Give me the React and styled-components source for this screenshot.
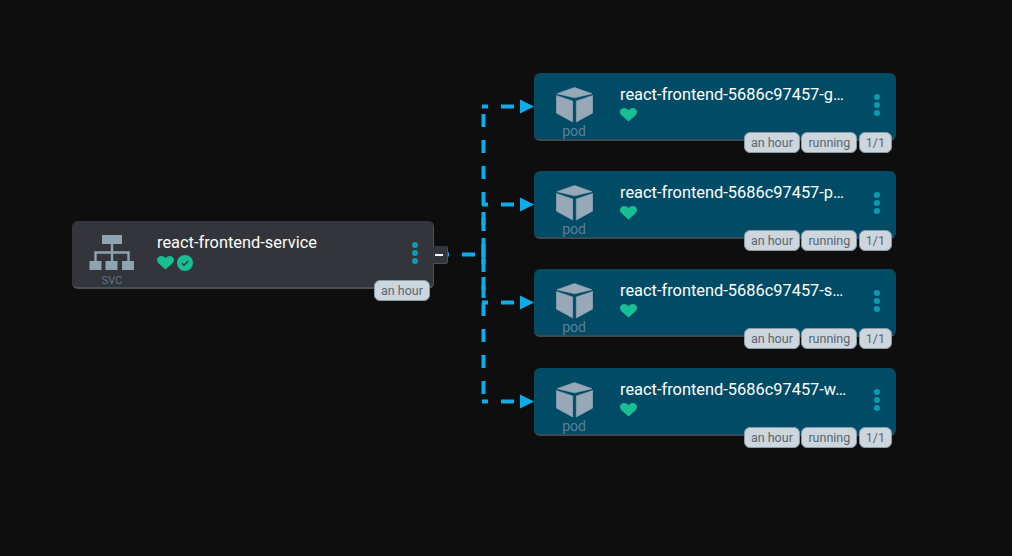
import React from "react";
import styled, { createGlobalStyle } from "styled-components";

const GlobalStyle = createGlobalStyle`
  html, body {
    margin: 0;
    background: #0e0e0e;
    font-family: Roboto, "Liberation Sans", sans-serif;
  }
`;

const Canvas = styled.div`
  position: relative;
  width: 1012px;
  height: 556px;
  overflow: hidden;
  background: #0e0e0e;
`;

const Edges = styled.svg`
  position: absolute;
  left: 0;
  top: 0;
`;

const Node = styled.div`
  position: absolute;
  left: ${(p) => p.$x}px;
  top: ${(p) => p.$y}px;
  width: 362px;
  height: 68px;
  box-sizing: border-box;
  display: flex;
  align-items: stretch;
  border-radius: 6px;
  background: ${(p) => (p.$pod ? "#004c67" : "#33353b")};
  border-bottom: 2px solid ${(p) => (p.$pod ? "#3e4a52" : "#47525b")};
  border-right: 1px solid ${(p) => (p.$pod ? "#2c3a42" : "#47525b")};
`;

const KindColumn = styled.div`
  width: 80px;
  flex: none;
  display: flex;
  flex-direction: column;
  align-items: center;
  padding-top: 14px;
  box-sizing: border-box;
  svg {
    flex: none;
  }
`;

const KindLabel = styled.div`
  font-size: ${(p) => (p.$pod ? 14 : 11)}px;
  line-height: ${(p) => (p.$pod ? 14 : 12)}px;
  color: ${(p) => (p.$pod ? "#5f7f91" : "#5f7384")};
  margin-top: ${(p) => (p.$pod ? 1 : 4)}px;
`;

const Info = styled.div`
  flex: 1;
  min-width: 0;
  padding-top: 12px;
  padding-left: ${(p) => (p.$pod ? 6 : 5)}px;
`;

const Name = styled.div`
  font-size: 16.4px;
  line-height: 19px;
  color: #fff;
  white-space: nowrap;
`;

const StatusRow = styled.div`
  display: flex;
  align-items: center;
  gap: 3px;
  margin-top: ${(p) => (p.$pod ? 4 : 3)}px;
`;

const Menu = styled.div`
  flex: none;
  width: 36px;
  display: flex;
  flex-direction: column;
  align-items: center;
  justify-content: center;
  gap: 2px;
  padding-bottom: 2px;
`;

const Dot = styled.span`
  width: 6px;
  height: 6px;
  border-radius: 50%;
  background: #0b9cb3;
`;

const Tags = styled.div`
  position: absolute;
  right: 3px;
  top: 59px;
  display: flex;
  gap: 1.5px;
`;

const Tag = styled.div`
  height: 21px;
  box-sizing: border-box;
  padding: 0 6px;
  display: flex;
  align-items: center;
  font-size: 12.5px;
  color: #5a6570;
  background: #cdd6dd;
  border: 1.5px solid #8a9ba8;
  border-radius: 6px;
`;

const Collapse = styled.div`
  position: absolute;
  left: 100%;
  top: 25px;
  width: 14px;
  height: 17px;
  background: #33353b;
  border-right: 1px solid #47525b;
  border-bottom: 1px solid #47525b;
  border-radius: 0 3px 3px 0;
  display: flex;
  align-items: center;
  justify-content: center;
  &::after {
    content: "";
    width: 8px;
    height: 2px;
    margin-left: -3px;
    background: #fff;
  }
`;

const Heart = () => (
  <svg width="17" height="14" viewBox="0 0 17 15" preserveAspectRatio="none">
    <path
      d="M8.500 14.500 1.500 7.800C-.5 5.800-.5 2.800 1.400 1.100 3.400-.5 6.500-.2 8.500 2.400 10.500-.2 13.600-.5 15.600 1.100c1.900 1.700 1.900 4.700-.1 6.700z"
      fill="#18be94"
    />
  </svg>
);

const Check = () => (
  <svg width="16" height="16" viewBox="0 0 16 16">
    <circle cx="8" cy="8" r="8" fill="#18be94" />
    <path d="M4.800 8.200 7 10.300l4.200-4.300" fill="none" stroke="#33353b" strokeWidth="1.500" />
  </svg>
);

const ServiceIcon = () => (
  <svg width="46" height="36" viewBox="0 0 46 36">
    <g fill="#8fa4b3">
      <rect x="13" y="0" width="20" height="9" />
      <rect x="0.500" y="26" width="12" height="9" />
      <rect x="16.500" y="26" width="12" height="9" />
      <rect x="33" y="26" width="12" height="9" />
    </g>
    <path d="M23 9v17M6.500 26v-8.500h33V26" fill="none" stroke="#8fa4b3" strokeWidth="2.400" />
  </svg>
);

const PodIcon = () => (
  <svg width="37" height="36" viewBox="0 0 37 36">
    <g fill="#97a9b7" stroke="#97a9b7" strokeWidth="0.600" strokeLinejoin="round">
      <path d="M18.500.5 36 6.700 18.500 10.800 1 6.700z" />
      <path d="M.3 8.500 16.700 14V35L.3 26z" />
      <path d="M36.700 8.500 20.300 14V35L36.700 26z" />
    </g>
  </svg>
);

const pods = [
  { name: "react-frontend-5686c97457-g…", y: 73, trunk: "M483.500 257V114" },
  { name: "react-frontend-5686c97457-p…", y: 171, trunk: "M483.500 251V204" },
  { name: "react-frontend-5686c97457-s…", y: 269, trunk: "M483.500 259V303" },
  { name: "react-frontend-5686c97457-w…", y: 368, trunk: "M483.500 251V394" },
];

const edgeColor = "#0dadea";

const Dash = (props) => (
  <path fill="none" stroke={edgeColor} strokeWidth="4" strokeDasharray="13 13" {...props} />
);

export default function App() {
  return (
    <Canvas>
      <GlobalStyle />
      <Edges width="1012" height="556">
        <Dash d="M436 254.500H476" />
        {pods.map((pod) => {
          const y = pod.y + 33.5;
          return (
            <g key={pod.name}>
              <Dash d={pod.trunk} />
              <Dash d={`M514 ${y}H482`} />
              <path d={`M520 ${y - 7}L534 ${y}L520 ${y + 7}z`} fill={edgeColor} />
            </g>
          );
        })}
      </Edges>

      <Node $x={72} $y={221}>
        <KindColumn>
          <ServiceIcon />
          <KindLabel>SVC</KindLabel>
        </KindColumn>
        <Info>
          <Name>react-frontend-service</Name>
          <StatusRow>
            <Heart />
            <Check />
          </StatusRow>
        </Info>
        <Menu>
          <Dot />
          <Dot />
          <Dot />
        </Menu>
        <Collapse />
        <Tags>
          <Tag>an hour</Tag>
        </Tags>
      </Node>

      {pods.map((pod) => (
        <Node key={pod.name} $pod $x={534} $y={pod.y}>
          <KindColumn>
            <PodIcon />
            <KindLabel $pod>pod</KindLabel>
          </KindColumn>
          <Info $pod>
            <Name>{pod.name}</Name>
            <StatusRow $pod>
              <Heart />
            </StatusRow>
          </Info>
          <Menu>
            <Dot />
            <Dot />
            <Dot />
          </Menu>
          <Tags>
            <Tag>an hour</Tag>
            <Tag>running</Tag>
            <Tag>1/1</Tag>
          </Tags>
        </Node>
      ))}
    </Canvas>
  );
}
